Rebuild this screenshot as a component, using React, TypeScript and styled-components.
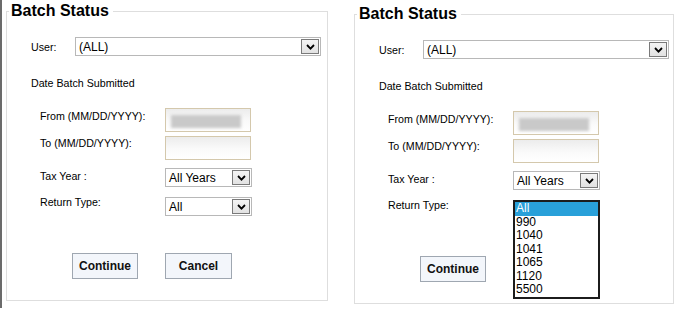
import React from 'react';
import styled, { createGlobalStyle } from 'styled-components';

const GlobalStyle = createGlobalStyle`
  html, body {
    margin: 0;
    padding: 0;
    background: #fff;
  }
  body {
    font-family: "Liberation Sans", Arial, sans-serif;
    color: #000;
  }
`;

const Page = styled.div`
  display: flex;
  align-items: flex-start;
  width: 682px;
  height: 313px;
  overflow: hidden;
`;

const LeftEdge = styled.div`
  border-left: 2px solid #6b6b6b;
  height: 308px;
  padding-left: 4px;
`;

const RightSide = styled.div`
  margin-left: 26px;
`;

const Frame = styled.fieldset<{ $top: number; $width: number }>`
  margin: ${(p) => p.$top}px 0 0;
  padding: 0;
  width: ${(p) => p.$width}px;
  box-sizing: border-box;
  border: 1px solid #dedede;
  min-inline-size: 0;
`;

const Title = styled.legend`
  margin-left: 2px;
  padding: 0 4px 0 2px;
  font: bold 16px/18px "Liberation Sans", Arial, sans-serif;
`;

const Body = styled.div`
  padding: 17px 0 21px;
`;

const Label = styled.span<{ $nudge?: number }>`
  font-size: 10.67px;
  line-height: 12px;
  margin-top: ${(p) => p.$nudge ?? 0}px;
`;

const UserRow = styled.div`
  display: flex;
  align-items: center;
  padding-left: 24px;
  ${Label} {
    width: 44px;
  }
`;

const Heading = styled(Label)`
  display: block;
  margin-top: 21px;
  padding-left: 24px;
`;

const FormGrid = styled.div`
  display: grid;
  grid-template-columns: 125px 86px;
  grid-template-rows: 28px 32px 29px 19px;
  align-items: start;
  margin-top: 19px;
  padding-left: 33px;
`;

const SelectBox = styled.div<{ $width: number }>`
  display: flex;
  align-items: center;
  justify-content: space-between;
  width: ${(p) => p.$width}px;
  height: 19px;
  box-sizing: border-box;
  border: 1px solid #b8b8b8;
  padding: 0 1px 0 3px;
  background: #fff;
  font-size: 12px;
`;

const ArrowBox = styled.span`
  display: flex;
  align-items: center;
  justify-content: center;
  width: 18px;
  height: 15px;
  box-sizing: border-box;
  border: 1px solid #7a7a7a;
  background: linear-gradient(#f4f4f4, #e2e2e2);
`;

const DateInput = styled.div`
  width: 86px;
  height: 24px;
  box-sizing: border-box;
  border: 1px solid #d4c8ac;
  background: linear-gradient(#ececec, #fafafa 55%, #fff);
  padding: 6px 0 0 5px;
`;

const Redacted = styled.div`
  width: 70px;
  height: 13px;
  background: #c9c9c9;
  filter: blur(1.5px);
`;

const Cell = styled.div`
  position: relative;
  height: 19px;
`;

const ListBox = styled.ul`
  position: absolute;
  top: 0;
  left: 0;
  z-index: 2;
  width: 87px;
  box-sizing: border-box;
  margin: 0;
  padding: 0;
  list-style: none;
  border: 2px solid #1c1c1c;
  background: #fff;
  font-size: 12px;
  line-height: 13.5px;
`;

const Option = styled.li<{ $selected?: boolean }>`
  padding-left: 1px;
  background: ${(p) => (p.$selected ? '#29a0d9' : 'transparent')};
  color: ${(p) => (p.$selected ? '#fff' : '#000')};
`;

const Buttons = styled.div`
  display: flex;
  gap: 27px;
  margin-top: 37px;
  padding-left: 65px;
`;

const Button = styled.button<{ $width: number }>`
  width: ${(p) => p.$width}px;
  height: 26px;
  padding: 0;
  border: 1px solid #9fa7b1;
  background: #f3f6fb;
  font: bold 12px "Liberation Sans", Arial, sans-serif;
  color: #111;
`;

const Chevron = () => (
  <svg width="9" height="6" viewBox="0 0 9 6">
    <path d="M1 1 L4.5 4.6 L8 1" stroke="#000" strokeWidth="1.8" fill="none" />
  </svg>
);

const FakeSelect: React.FC<{ value: string; width: number }> = ({ value, width }) => (
  <SelectBox $width={width}>
    <span>{value}</span>
    <ArrowBox>
      <Chevron />
    </ArrowBox>
  </SelectBox>
);

const returnTypes = ['All', '990', '1040', '1041', '1065', '1120', '5500'];

const BatchStatus: React.FC<{ top: number; width: number; open?: boolean }> = ({ top, width, open }) => (
  <Frame $top={top} $width={width}>
    <Title>Batch Status</Title>
    <Body>
      <UserRow>
        <Label>User:</Label>
        <FakeSelect value="(ALL)" width={246} />
      </UserRow>
      <Heading>Date Batch Submitted</Heading>
      <FormGrid>
        <Label $nudge={2}>From (MM/DD/YYYY):</Label>
        <DateInput>
          <Redacted />
        </DateInput>
        <Label $nudge={1}>To (MM/DD/YYYY):</Label>
        <DateInput />
        <Label $nudge={2}>Tax Year :</Label>
        <FakeSelect value="All Years" width={87} />
        <Label $nudge={-1}>Return Type:</Label>
        <Cell>
          {open ? (
            <ListBox>
              {returnTypes.map((t, i) => (
                <Option key={t} $selected={i === 0}>
                  {t}
                </Option>
              ))}
            </ListBox>
          ) : (
            <FakeSelect value="All" width={87} />
          )}
        </Cell>
      </FormGrid>
      <Buttons>
        <Button $width={66}>Continue</Button>
        <Button $width={67}>Cancel</Button>
      </Buttons>
    </Body>
  </Frame>
);

export default function App() {
  return (
    <>
      <GlobalStyle />
      <Page>
        <LeftEdge>
          <BatchStatus top={2} width={322} />
        </LeftEdge>
        <RightSide>
          <BatchStatus top={5} width={320} open />
        </RightSide>
      </Page>
    </>
  );
}
